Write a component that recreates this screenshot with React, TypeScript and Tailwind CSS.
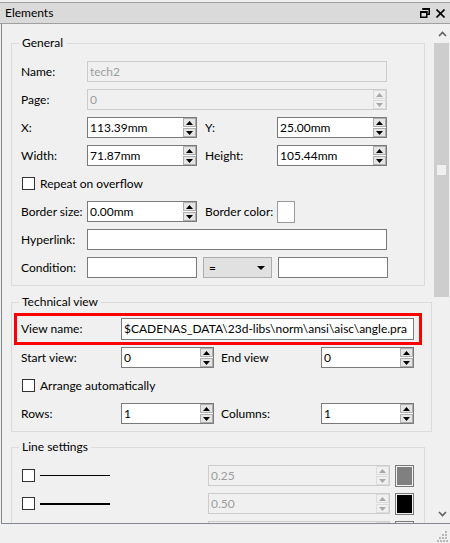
import React from 'react';

function Arrow({ up, color }: { up?: boolean; color: string }) {
  return (
    <svg width="7" height="4" viewBox="0 0 7 4">
      <path d={up ? 'M3.5 0 L7 4 H0 Z' : 'M0 0 H7 L3.5 4 Z'} fill={color} />
    </svg>
  );
}

function Spin({ off }: { off?: boolean }) {
  const btn = `flex h-[9px] w-[13px] items-center justify-center border ${
    off ? 'border-[#dcdcdc] bg-[#f0f0f0]' : 'border-[#adadad] bg-[#e5e5e5]'
  }`;
  const color = off ? '#a8a8a8' : '#000000';
  return (
    <div className="flex flex-col gap-px">
      <div className={btn}>
        <Arrow up color={color} />
      </div>
      <div className={btn}>
        <Arrow color={color} />
      </div>
    </div>
  );
}

function Field({
  value = '',
  width,
  spin,
  off,
  tall,
}: {
  value?: string;
  width: string;
  spin?: boolean;
  off?: boolean;
  tall?: boolean;
}) {
  return (
    <div
      className={`flex ${tall ? 'h-[22px]' : 'h-[21px]'} ${width} items-center border ${
        off ? 'border-[#cccccc] bg-[#f0f0f0] text-[#9d9d9d]' : 'border-[#7a7a7a] bg-white text-black'
      }`}
    >
      <span className="flex-1 overflow-hidden whitespace-nowrap pl-[2px] leading-[16px]">{value}</span>
      {spin && <Spin off={off} />}
    </div>
  );
}

function Check({ label }: { label?: string }) {
  return (
    <div className="flex h-[21px] items-center">
      <div className="ml-px h-[13px] w-[13px] border border-[#333333] bg-white" />
      {label && <span className="ml-[5px] whitespace-nowrap">{label}</span>}
    </div>
  );
}

function Group({ title, className, children }: { title: string; className?: string; children: React.ReactNode }) {
  return (
    <fieldset className={`w-[414px] border border-[#dcdcdc] px-[9px] pb-[7px] ${className ?? ''}`}>
      <legend className="ml-[-2px] px-[3px] leading-[16px]">{title}</legend>
      {children}
    </fieldset>
  );
}

function Row({ children }: { children: React.ReactNode }) {
  return <div className="flex h-[21px] items-center whitespace-nowrap">{children}</div>;
}

function LineRow({ thick, swatch, value }: { thick?: boolean; swatch: string; value?: string }) {
  return (
    <div className="flex h-[21px] items-center">
      <div className="ml-px h-[13px] w-[13px] border border-[#333333] bg-white" />
      <div className={`ml-[5px] w-[70px] bg-black ${thick ? 'h-[2px]' : 'h-px'}`} />
      <div className="ml-[98px]">
        <Field value={value} width="w-[182px]" spin off />
      </div>
      <div className="ml-[5px] flex h-[22px] w-[19px] items-center justify-center border border-[#7a7a7a]">
        <div className={`h-[18px] w-[15px] ${swatch}`} />
      </div>
    </div>
  );
}

export default function App() {
  return (
    <div className="flex h-[543px] w-[450px] flex-col overflow-hidden bg-[#f0f0f0] font-['Lato',sans-serif] text-[12px] text-black">
      {/* docked panel caption */}
      <div className="mt-[2px] flex h-[22px] items-center border-y border-[#a0a0a0] bg-[#dadada] pl-[5px] pr-[5px]">
        <span className="flex-1 leading-[16px]">Elements</span>
        <svg width="10" height="10" viewBox="0 0 10 10" className="mr-[6px]">
          <path d="M3 0.75 H9.25 V6.25 H7" fill="none" stroke="#000" strokeWidth="1.5" />
          <rect x="0.75" y="3.75" width="6" height="5.5" fill="none" stroke="#000" strokeWidth="1.5" />
          <rect x="0" y="3" width="7.5" height="2" fill="#000" />
          <rect x="2.25" y="0" width="7.75" height="2" fill="#000" />
        </svg>
        <svg width="9" height="9" viewBox="0 0 9 9">
          <path d="M0.5 0.5 L8.5 8.5 M8.5 0.5 L0.5 8.5" stroke="#000" strokeWidth="1.6" />
        </svg>
      </div>

      <div className="ml-px flex h-[500px] border-b border-l border-[#828790]">
        <div className="flex-1 overflow-hidden pl-[9px] pt-[11px]">
          <Group title="General">
            <div className="flex flex-col gap-[7px] pt-[10px]">
              <Row>
                <span className="w-[66px]">Name:</span>
                <Field value="tech2" width="w-[300px]" off />
              </Row>
              <Row>
                <span className="w-[66px]">Page:</span>
                <Field value="0" width="w-[300px]" spin off />
              </Row>
              <Row>
                <span className="w-[66px]">X:</span>
                <Field value="113.39mm" width="w-[110px]" spin />
                <span className="ml-[8px] w-[72px]">Y:</span>
                <Field value="25.00mm" width="w-[110px]" spin />
              </Row>
              <Row>
                <span className="w-[66px]">Width:</span>
                <Field value="71.87mm" width="w-[110px]" spin />
                <span className="ml-[8px] w-[72px]">Height:</span>
                <Field value="105.44mm" width="w-[110px]" spin />
              </Row>
              <Check label="Repeat on overflow" />
              <Row>
                <span className="w-[66px]">Border size:</span>
                <Field value="0.00mm" width="w-[110px]" spin />
                <span className="ml-[8px] w-[72px]">Border color:</span>
                <div className="h-[22px] w-[18px] border border-[#9a9a9a] bg-white" />
              </Row>
              <Row>
                <span className="w-[66px]">Hyperlink:</span>
                <Field width="w-[300px]" />
              </Row>
              <Row>
                <span className="w-[66px]">Condition:</span>
                <Field width="w-[110px]" />
                <div className="ml-[6px] flex h-[21px] w-[69px] items-center border border-[#adadad] bg-[#e1e1e1] pl-[5px] pr-[6px]">
                  <span className="flex-1 leading-[16px]">=</span>
                  <svg width="8" height="4" viewBox="0 0 8 4">
                    <path d="M0 0 H8 L4 4 Z" fill="#000" />
                  </svg>
                </div>
                <div className="ml-[6px]">
                  <Field width="w-[110px]" />
                </div>
              </Row>
            </div>
          </Group>

          <Group title="Technical view" className="mt-[8px]">
            <div className="pt-[3px]">
              <div className="ml-[-7px] flex h-[32px] w-[408px] items-center whitespace-nowrap border-[3px] border-[#ff0000] pl-[4px]">
                <span className="w-[100px]">View name:</span>
                <Field value="$CADENAS_DATA\23d-libs\norm\ansi\aisc\angle.pra" width="w-[293px]" tall />
              </div>
              <div className="mt-[2px] flex flex-col gap-[7px]">
                <Row>
                  <span className="w-[100px]">Start view:</span>
                  <Field value="0" width="w-[93px]" spin />
                  <span className="ml-[7px] w-[100px]">End view</span>
                  <Field value="0" width="w-[93px]" spin />
                </Row>
                <Check label="Arrange automatically" />
                <Row>
                  <span className="w-[100px]">Rows:</span>
                  <Field value="1" width="w-[93px]" spin />
                  <span className="ml-[7px] w-[100px]">Columns:</span>
                  <Field value="1" width="w-[93px]" spin />
                </Row>
              </div>
            </div>
          </Group>

          <Group title="Line settings" className="mt-[7px]">
            <div className="flex flex-col gap-[7px] pt-[10px]">
              <LineRow value="0.25" swatch="bg-[#808080]" />
              <LineRow value="0.50" swatch="bg-black" thick />
              <LineRow swatch="bg-black" thick />
            </div>
          </Group>
        </div>

        {/* vertical scrollbar */}
        <div className="flex w-[17px] flex-col bg-[#f0f0f0] pl-px">
          <div className="flex h-[19px] items-center justify-center">
            <svg width="9" height="6" viewBox="0 0 9 6">
              <path d="M1 5 L4.5 1.5 L8 5" fill="none" stroke="#606060" strokeWidth="1.6" />
            </svg>
          </div>
          <div className="flex h-[254px] w-[15px] flex-col items-center bg-[#cdcdcd] pt-[122px]">
            <div className="h-[10px] w-[9px] bg-[#f0f0f0]" />
          </div>
          <div className="flex-1" />
          <div className="flex h-[19px] items-center justify-center">
            <svg width="9" height="6" viewBox="0 0 9 6">
              <path d="M1 1 L4.5 4.5 L8 1" fill="none" stroke="#606060" strokeWidth="1.6" />
            </svg>
          </div>
        </div>
      </div>

      {/* status strip with size grip */}
      <div className="flex flex-1 items-end justify-end pb-px pr-[2px]">
        <svg width="11" height="11" viewBox="0 0 11 11">
          {[
            [8, 0],
            [5, 3],
            [8, 3],
            [2, 6],
            [5, 6],
            [8, 6],
            [0, 9],
            [3, 9],
            [6, 9],
            [9, 9],
          ].map(([x, y], i) => (
            <rect key={i} x={x} y={y} width="2" height="2" fill="#b8b8b8" />
          ))}
        </svg>
      </div>
    </div>
  );
}
